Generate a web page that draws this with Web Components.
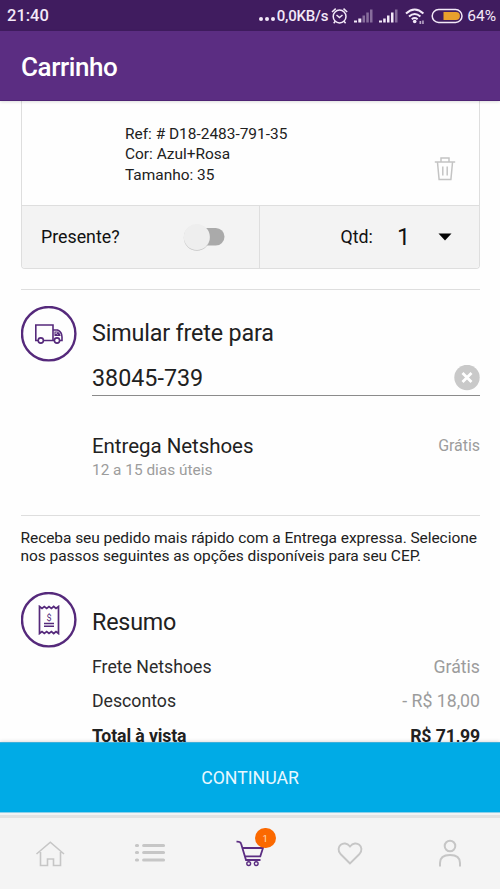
<!DOCTYPE html>
<html lang="pt-BR">
<head>
<meta charset="utf-8">
<title>Carrinho</title>
<style>
html, body { margin: 0; height: 889px; overflow: hidden; background: #fefefe; }
body { font-family: Roboto, "Liberation Sans", sans-serif; color: #212121; }
</style>
</head>
<body>
<cart-app></cart-app>
<script>
const define = (name, html) => {
  const t = document.createElement('template');
  t.innerHTML = html;
  customElements.define(name, class extends HTMLElement {
    constructor() {
      super();
      this.attachShadow({ mode: 'open' }).append(t.content.cloneNode(true));
    }
  });
};

define('status-bar', `
<style>
:host { display: flex; height: 31px; box-sizing: border-box; background: #401c5f; color: #f3e9f8; align-items: center; padding: 0 4px 0 7px; font-weight: 500; font-size: 16.500px; line-height: 20px; }
.time { flex: 1; }
.speed { font-size: 15px; letter-spacing: -.2px; display: flex; align-items: center; margin-right: 2px; }
.dots { display: flex; gap: 2px; margin: 7px 2px 0 0; }
.dots i { width: 4px; height: 4px; border-radius: 50%; background: currentColor; }
svg { display: block; flex: none; }
.pct { font-size: 15.500px; font-weight: 400; }
</style>
<span class="time">21:40</span>
<span class="speed"><span class="dots"><i></i><i></i><i></i></span><span>0,0KB/s</span></span>
<svg width="137" height="30" viewBox="331 0 137 30" fill="none" stroke="currentColor">
  <g stroke-width="1.5"><circle cx="340.600" cy="15.500" r="6.400"/><path d="M333 11l3.700-3.400M348.200 11l-3.700-3.400M337.500 14l3 2.500 3-2.500M336.300 20.300l-1.600 2M345 20.300l1.600 2"/></g>
  <g stroke="none" fill="currentColor">
    <path d="M355 19.500h3v2h-3zM359.300 17.500h3v4h-3z"/><path opacity=".4" d="M363.500 14.500h2.500v7h-2.500zM367.300 11.500h2.500v10h-2.500zM371 8.500h2.500v13H371z"/>
    <path d="M380 19.500h3v2h-3zM384.200 17.500h2.500v4h-2.500zM388 14.500h2.500v7H388zM392 11.500h2.500v10H392z"/><path opacity=".4" d="M396 8.500h2.500v13H396z"/>
    <circle cx="415.700" cy="20.500" r="1.800"/><path d="M420.500 20h1.700v3h-1.700zM423.200 19.500h1.500v3.500h-1.500z" opacity=".7"/>
  </g>
  <g stroke-width="2"><path d="M407 12.500q8.700-8 17.400 0M410 15.500q5.700-5 11.400 0M412.800 18.200q2.900-2.400 5.800 0"/></g>
  <rect x="433.200" y="8.600" width="29.800" height="12.800" rx="6.400" stroke-width="1.500"/>
  <path d="M444.500 11.100h12.500a3.900 3.900 0 0 1 0 7.800h-12.500z" fill="#e9a02c" stroke="none"/>
</svg>
<span class="pct">64%</span>`);

define('app-bar', `
<style>
:host { display: flex; height: 70px; background: #5b2d82; color: #fff; align-items: center; padding-left: 21px; border-bottom: 1px solid #4e2474; box-sizing: border-box; position: relative; box-shadow: 0 1px 3px #0002; }
h1 { margin: 2px 0 0; font-size: 26px; line-height: 32px; font-weight: 500; letter-spacing: -.4px; }
</style><h1><slot></slot></h1>`);

define('toggle-switch', `
<style>
:host { display: block; width: 42px; height: 28px; }
svg { display: block; }
</style>
<svg width="42" height="28"><rect x="8" y="5" width="33.500" height="17.500" rx="8.700" fill="#aaa"/><circle cx="13.800" cy="14.800" r="13" fill="#c4c4c4"/><circle cx="13.800" cy="14" r="13" fill="#eee"/></svg>`);

define('product-card', `
<style>
:host { display: block; margin: 0 20px 0 21px; height: 168px; box-sizing: border-box; border: 1px solid #dedede; border-top: 0; border-radius: 0 0 4px 4px; overflow: hidden; }
.info { height: 105px; display: flex; justify-content: space-between; padding: 23px 23.500px 0 103px; box-sizing: border-box; border-bottom: 1px solid #dedede; font-size: 15.450px; line-height: 20.400px; }
.info svg { margin-top: 32px; }
.opts { display: flex; height: 62px; background: #f3f3f3; font-size: 17.800px; color: #111; }
.gift, .qty { display: flex; align-items: center; box-sizing: border-box; }
.gift { width: 238px; border-right: 1px solid #dedede; justify-content: space-between; padding: 0 34px 0 19px; }
.gift span, .qty span { padding-bottom: 1px; }
.qty { flex: 1; padding-left: 80.500px; }
.n { font-size: 23.500px; margin-left: 24px; width: 41px; }
</style>
<div class="info">
  <div><slot></slot></div>
  <svg width="22" height="26" viewBox="0 0 22 26" fill="none" stroke="#c4c4c4" stroke-width="1.500"><path d="M.8 6h20.400M7 6V2h8v4M3.500 6.500l1.600 17h11.800l1.600-17M8.800 10.500v9M13.200 10.500v9"/></svg>
</div>
<div class="opts">
  <div class="gift"><span>Presente?</span><toggle-switch></toggle-switch></div>
  <div class="qty"><span>Qtd:</span><span class="n">1</span><svg width="14" height="8"><path d="M.5.500h13L7 7.500z" fill="#050505"/></svg></div>
</div>`);

define('round-icon', `
<style>
:host { display: grid; place-items: center; width: 56px; height: 56px; flex: none; margin: 0 .5px 0 -.5px; }
:host > *, ::slotted(*) { grid-area: 1 / 1; }
svg { display: block; }
</style><svg width="56" height="56"><circle cx="27.700" cy="27.700" r="26.700" fill="none" stroke="#55297b" stroke-width="2.400"/></svg><slot></slot>`);

define('shipping-quote', `
<style>
:host { display: flex; gap: 15px; margin: 20px 20px 0 21px; border-top: 1px solid #dedede; border-bottom: 1px solid #dedede; height: 227px; box-sizing: border-box; padding-top: 16px; }
round-icon { margin: 0 .5px 0 -.5px; }
.body { flex: 1; }
h2 { margin: 12px 0 0; font-size: 23.300px; letter-spacing: -.15px; line-height: 30px; font-weight: 400; }
.field { display: flex; justify-content: space-between; align-items: center; height: 47px; box-sizing: border-box; border-bottom: 1px solid #8b8b8b; font-size: 23.300px; line-height: 30px; padding-top: 12px; margin-top: .5px; }
.opt { display: flex; justify-content: space-between; margin-top: 36.500px; font-size: 20.500px; letter-spacing: -.05px; line-height: 28px; }
.g { font-size: 16px; color: #9c9c9c; line-height: 28px; }
.d { font-size: 15.400px; line-height: 20px; color: #9c9c9c; }
</style>
<round-icon><svg width="30" height="22" viewBox="0 0 30 22" fill="none" stroke="#55297b" stroke-width="1.600"><path d="M4 17.500H1.800V2H19v15.500H9.300M19 7h4.500q4.500 2 4.500 7v3.500h-2M19 17.500h1"/><circle cx="6.800" cy="17.500" r="2.600"/><circle cx="23" cy="17.500" r="2.600"/><path stroke-width="1.100" d="M21 9h2.300q2.200 1 2.700 3.500h-5zM21 12.500l2.500-2 2 2"/></svg></round-icon>
<div class="body">
  <h2>Simular frete para</h2>
  <div class="field"><span>38045-739</span><svg width="26" height="26"><circle cx="13" cy="12.500" r="12.700" fill="#c9c9c9"/><path d="M8.500 8l9 9m0-9l-9 9" stroke="#fff" stroke-width="2.800"/></svg></div>
  <div class="opt"><span>Entrega Netshoes</span><span class="g">Grátis</span></div>
  <div class="d">12 a 15 dias úteis</div>
</div>`);

define('express-note', `
<style>
:host { display: block; margin: 12.500px 0 0 20.500px; font-size: 15.500px; letter-spacing: -.06px; line-height: 18.300px; white-space: nowrap; }
</style><slot></slot>`);

define('summary-row', `
<style>
:host { display: flex; justify-content: space-between; font-size: 17.700px; line-height: 34.400px; color: #2b2b2b; }
.v { color: #9c9c9c; }
:host([total]) { font-weight: 700; color: #212121; letter-spacing: -.12px; padding-top: .6px; }
:host([total]) .v { color: #212121; }
</style><span><slot></slot></span><span class="v"><slot name="value"></slot></span>`);

define('order-summary', `
<style>
:host { display: flex; gap: 15px; margin: 26.500px 20px 0 21px; }
round-icon { margin: 0 .5px 0 -.5px; }
.body { flex: 1; }
h2 { margin: 15px 0 13px; font-size: 23.300px; letter-spacing: -.2px; line-height: 30px; font-weight: 400; }
</style>
<round-icon><svg width="22" height="30" viewBox="0 0 22 30" fill="none" stroke="#55297b"><path stroke-width="1.700" d="M1.500 1.500l2.500 2 2.300-2 2.400 2 2.300-2 2.400 2 2.300-2 2.300 2 2.500-2v27l-2.500-2-2.300 2-2.300-2-2.400 2-2.300-2-2.400 2-2.300-2-2.500 2z"/><path stroke-width="1.400" d="M6 18.500h10M6 21.200h10"/><text x="11" y="15.500" text-anchor="middle" font-size="9" font-weight="400" fill="#55297b" stroke="none">$</text></svg></round-icon>
<div class="body"><h2>Resumo</h2><slot></slot></div>`);

define('continue-button', `
<style>
:host { display: block; position: relative; border-top: 1px solid #3cb0dc; border-bottom: 1px solid #8cd0ea; background: #00abe6; height: 71px; box-sizing: border-box; box-shadow: 0 0 4px #0003; }
button { all: unset; display: grid; place-items: center; width: 100%; height: 69px; color: #e8f8ff; font-size: 17.700px; }
</style><button><slot></slot></button>`);

define('tab-bar', `
<style>
:host { display: grid; grid-template-columns: repeat(5, 1fr); height: 76px; box-sizing: border-box; position: relative; background: linear-gradient(#f1f3f4 0 2px, #e2e2e2 2px 5px, #f4f4f4 5px); padding-top: 4px; }
div { display: grid; place-items: center; position: relative; }
svg { display: block; fill: none; stroke: #c6c6c6; stroke-width: 1.600; }
b { position: absolute; left: 55px; top: 10.500px; width: 20.500px; height: 20.500px; border-radius: 50%; background: #fb6900; color: #ffe0c0; font: 400 9.500px/21px Roboto, sans-serif; text-align: center; }
</style>
<div><svg width="100" height="72"><path d="M36.500 37L50.300 25.200 64 37M40.500 35v13.500h7V42h6v6.500h7V35"/></svg></div>
<div><svg width="100" height="72" stroke-linecap="round" style="stroke-width:3.200"><path d="M36.500 28.500h1M36.500 35.500h1M36.500 43h1M43.700 28.500h19.800M43.700 35.500h19.800M43.700 43h19.800"/></svg></div>
<div><svg width="100" height="72" style="stroke:#5b2d82;stroke-width:1.800"><path d="M36.500 24.700q4-.2 4.600 2L46 43H60.500M42.300 31H63L60.300 39.300H45"/><circle cx="48.700" cy="46.600" r="1.900" stroke-width="1.400"/><circle cx="56.200" cy="46.600" r="1.900" stroke-width="1.400"/></svg><b>1</b></div>
<div><svg width="100" height="72" style="stroke-width:1.900"><path d="M50 46.500L40.500 37c-6-7 3.500-15 9.500-7.500 6-7.500 15.500.500 9.500 7.500z"/></svg></div>
<div><svg width="100" height="72" style="stroke-width:2"><circle cx="50" cy="29" r="5.300"/><path d="M40 49.500V46q0-8 10-8t10 8v3.500"/></svg></div>`);

define('cart-app', `
<style>
:host { display: flex; flex-direction: column; width: 500px; height: 889px; overflow: hidden; }
main { flex: 1; min-height: 0; overflow: hidden; background: #fefefe; }
</style>
<status-bar></status-bar>
<app-bar>Carrinho</app-bar>
<main>
  <product-card>Ref: # D18-2483-791-35<br>Cor: Azul+Rosa<br>Tamanho: 35</product-card>
  <shipping-quote></shipping-quote>
  <express-note>Receba seu pedido mais rápido com a Entrega expressa. Selecione<br>nos passos seguintes as opções disponíveis para seu CEP.</express-note>
  <order-summary>
    <summary-row>Frete Netshoes<span slot="value">Grátis</span></summary-row>
    <summary-row>Descontos<span slot="value">- R$ 18,00</span></summary-row>
    <summary-row total>Total à vista<span slot="value">R$ 71,99</span></summary-row>
  </order-summary>
</main>
<continue-button>CONTINUAR</continue-button>
<tab-bar></tab-bar>`);
</script>
</body>
</html>
